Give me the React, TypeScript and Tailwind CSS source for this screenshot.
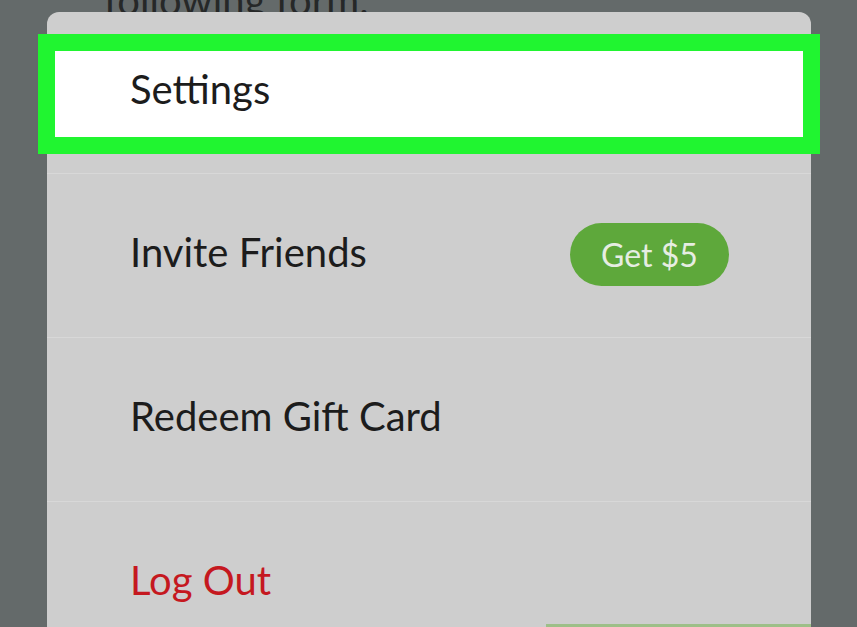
export default function App() {
  const font = { fontFamily: 'Lato, "Noto Sans", sans-serif' }

  return (
    <div className="relative h-[627px] w-[857px] overflow-hidden bg-[#646a6a]" style={font}>
      {/* page text behind the sheet */}
      <p className="absolute left-[104px] top-[-30px] text-[40px] text-[#262828]">
        following form.
      </p>

      {/* menu sheet */}
      <div className="relative ml-[47px] mt-[12px] h-[640px] w-[764px] rounded-t-[12px] bg-[#cecece]">
        <div className="relative flex h-[161px] items-center pb-[8px]">
          <div className="absolute left-[-9px] top-[22px] h-[120px] w-[782px] border-[17px] border-[#20f530] bg-white" />
          <span className="relative pl-[83px] text-[40px] text-[#1c1c1c]">Settings</span>
        </div>

        <div className="flex h-[164px] items-center justify-between border-t border-[#d8d8d8] pb-[8px] pl-[83px] pr-[82px]">
          <span className="text-[40px] text-[#1c1c1c]">Invite Friends</span>
          <span className="mt-[6px] flex h-[63px] w-[159px] items-center justify-center rounded-full bg-[#5ea83b] text-[32px] text-[#e6ede2]">
            Get $5
          </span>
        </div>

        <div className="flex h-[164px] items-center border-t border-[#d8d8d8] pb-[8px] pl-[83px]">
          <span className="text-[40px] text-[#1c1c1c]">Redeem Gift Card</span>
        </div>

        <div className="flex h-[164px] items-center border-t border-[#d8d8d8] pb-[8px] pl-[83px]">
          <span className="text-[40px] text-[#c5181f]">Log Out</span>
        </div>
      </div>

      {/* green button peeking at the bottom */}
      <div className="absolute bottom-0 left-[546px] h-[3px] w-[265px] bg-[#9dbf88]" />
    </div>
  )
}
